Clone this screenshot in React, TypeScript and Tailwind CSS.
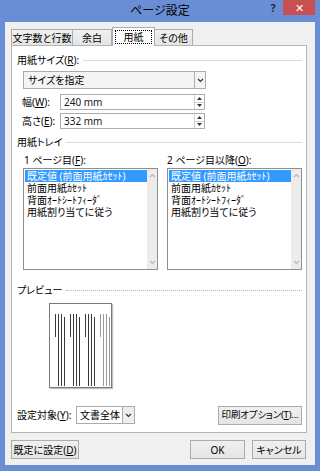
import React from "react";

const trayItems = ["既定値 (前面用紙ｶｾｯﾄ)", "前面用紙ｶｾｯﾄ", "背面ｵｰﾄｼｰﾄﾌｨｰﾀﾞ", "用紙割り当てに従う"];

const Chevron = ({ up = false, color = "#333" }: { up?: boolean; color?: string }) => (
  <svg width="7" height="5" viewBox="0 0 7 5">
    <path d={up ? "M1 4l2.5-2.5L6 4" : "M1 1l2.5 2.5L6 1"} stroke={color} strokeWidth="1.2" fill="none" />
  </svg>
);

const Spinner = () => (
  <div className="w-[10px] flex flex-col border-l border-[#d0d0d0]">
    <div className="flex-1 flex items-center justify-center border-b border-[#d0d0d0]">
      <svg width="5" height="3" viewBox="0 0 5 3"><path d="M0 3h5L2.5 0z" fill="#333" /></svg>
    </div>
    <div className="flex-1 flex items-center justify-center">
      <svg width="5" height="3" viewBox="0 0 5 3"><path d="M0 0h5L2.5 3z" fill="#333" /></svg>
    </div>
  </div>
);

const GroupLabel = ({ children, dotted = false }: { children: React.ReactNode; dotted?: boolean }) => (
  <div className="flex items-center h-[12px] ml-[5px] mr-[4px]">
    <span>{children}</span>
    <div className={`flex-1 ml-[4px] border-t ${dotted ? "border-dotted border-[#b8b8b8]" : "border-[#dcdcdc]"}`} />
  </div>
);

function ListBox() {
  return (
    <div className="flex h-[102px] w-[135px] border border-[#8e8f8f] bg-white">
      <div className="flex-1 pt-px pl-px">
        {trayItems.map((t, i) => (
          <div
            key={t}
            className={`h-[12px] leading-[12px] pl-[2px] whitespace-nowrap overflow-hidden ${i === 0 ? "bg-[#3399ff] text-white" : ""}`}
          >
            {t}
          </div>
        ))}
      </div>
      <div className="w-[10px] bg-[#ececec] flex flex-col justify-between items-center py-[4px]">
        <Chevron up color="#b5b5b5" />
        <Chevron color="#b5b5b5" />
      </div>
    </div>
  );
}

function PreviewPage() {
  const groups = [5, 20, 35, 50];
  return (
    <div className="ml-[37px] w-[63px] h-[85px] border border-[#7a7a7a] bg-white shadow-[1px_1px_1px_rgba(0,0,0,0.25)]">
      <svg width="61" height="83" viewBox="0 0 61 83">
        {groups.map((gx, g) => {
          const c = g === 3 ? "#9a9a9a" : "#3a3a3a";
          return (
            <g key={gx} stroke={c} strokeWidth="1">
              <line x1={gx + 0.5} y1="10" x2={gx + 0.5} y2="33" />
              <line x1={gx + 3.5} y1="10" x2={gx + 3.5} y2="82" />
              <line x1={gx + 6.5} y1="10" x2={gx + 6.5} y2="82" />
              <line x1={gx + 9.5} y1="13" x2={gx + 9.5} y2="82" />
            </g>
          );
        })}
      </svg>
    </div>
  );
}

const btn =
  "h-[19px] flex items-center justify-center whitespace-nowrap border border-[#acacac] bg-linear-to-b from-[#f0f0f0] to-[#e5e5e5]";

export default function App() {
  return (
    <div className="w-[320px] h-[471px] bg-[#6a8ed6] flex flex-col overflow-hidden text-[10px] leading-[12px] text-black font-['Noto_Sans','Noto_Sans_CJK_JP',sans-serif] [font-feature-settings:'palt']">
      {/* title bar */}
      <div className="h-[22px] flex items-start">
        <div className="w-[57px]" />
        <div className="flex-1 text-center pt-[4px] text-[12px] leading-[14px]">ページ設定</div>
        <div className="w-[57px] flex items-start">
          <div className="w-[20px] text-center font-bold text-[11px] leading-[16px] text-[#1c2a44]">?</div>
          <div className="w-[32px] h-[15px] bg-[#c75050] flex items-center justify-center text-white text-[11px] leading-[15px]">
            ✕
          </div>
        </div>
      </div>

      {/* body */}
      <div className="mx-[5px] mb-[6px] flex-1 bg-[#f0f0f0] pt-[5px] pl-[6px] pr-[8px] pb-[6px] flex flex-col">
        {/* tabs */}
        <div className="h-[18px] flex items-end">
          <div className="w-[62px] h-[16px] border border-b-0 border-[#acacac] bg-linear-to-b from-[#f0f0f0] to-[#e5e5e5] flex items-center justify-center">
            文字数と行数
          </div>
          <div className="w-[40px] -ml-px h-[16px] border border-b-0 border-[#acacac] bg-linear-to-b from-[#f0f0f0] to-[#e5e5e5] flex items-center justify-center">
            余白
          </div>
          <div className="relative z-10 w-[43px] h-[19px] -mb-px border border-b-0 border-[#acacac] bg-white p-[2px]">
            <div className="h-full border border-dotted border-black flex items-center justify-center">用紙</div>
          </div>
          <div className="w-[38px] h-[16px] border border-b-0 border-l-0 border-[#acacac] bg-linear-to-b from-[#f0f0f0] to-[#e5e5e5] flex items-center justify-center">
            その他
          </div>
        </div>

        {/* panel */}
        <div className="h-[388px] border border-[#b4b4b4] bg-white flex flex-col">
          <div className="mt-[8px]">
            <GroupLabel>
              用紙サイズ(<u>R</u>):
            </GroupLabel>
          </div>
          <div className="mt-[5px] ml-[11px] w-[183px] h-[18px] border border-[#acacac] bg-[#f4f4f4] flex">
            <div className="flex-1 pl-[4px] flex items-center">サイズを指定</div>
            <div className="w-[11px] border-l border-[#acacac] flex items-center justify-center">
              <Chevron />
            </div>
          </div>
          <div className="mt-[5px] ml-[10px] h-[16px] flex">
            <div className="w-[38px] flex items-center">
              幅(<u>W</u>):
            </div>
            <div className="w-[145px] border border-[#abadb3] bg-white flex">
              <div className="flex-1 pl-[3px] flex items-center text-[#1a1a1a]">240 mm</div>
              <Spinner />
            </div>
          </div>
          <div className="mt-[3px] ml-[10px] h-[16px] flex">
            <div className="w-[38px] flex items-center">
              高さ(<u>E</u>):
            </div>
            <div className="w-[145px] border border-[#abadb3] bg-white flex">
              <div className="flex-1 pl-[3px] flex items-center text-[#1a1a1a]">332 mm</div>
              <Spinner />
            </div>
          </div>

          <div className="mt-[7px]">
            <GroupLabel>用紙トレイ</GroupLabel>
          </div>
          <div className="mt-[6px] ml-[11px] flex gap-[9px]">
            <div className="w-[135px]">
              <div className="h-[12px] pl-px">
                1 ページ目(<u>F</u>):
              </div>
              <div className="mt-[2px]">
                <ListBox />
              </div>
            </div>
            <div className="w-[135px]">
              <div className="h-[12px]">
                2 ページ目以降(<u>O</u>):
              </div>
              <div className="mt-[2px]">
                <ListBox />
              </div>
            </div>
          </div>

          <div className="mt-[14px]">
            <GroupLabel dotted>プレビュー</GroupLabel>
          </div>
          <div className="mt-[7px]">
            <PreviewPage />
          </div>

          <div className="mt-[18px] ml-[5px] mr-[4px] h-[18px] flex items-center">
            <div className="w-[59px]">
              設定対象(<u>Y</u>):
            </div>
            <div className="w-[59px] h-[18px] border border-[#acacac] bg-white flex">
              <div className="flex-1 pl-[3px] flex items-center">文書全体</div>
              <div className="w-[12px] border-l border-[#acacac] bg-[#eeeeee] flex items-center justify-center">
                <Chevron />
              </div>
            </div>
            <div className={`${btn} ml-auto w-[84px] h-[18px] text-[9.5px] tracking-[-0.2px]`}>
              印刷オプション(<u>T</u>)...
            </div>
          </div>
        </div>

        {/* dialog buttons */}
        <div className="mt-[7px] flex">
          <div className={`${btn} w-[68px]`}>
            既定に設定(<u>D</u>)
          </div>
          <div className={`${btn} ml-auto w-[55px] border-[#3c9cf0]`}>OK</div>
          <div className={`${btn} ml-[7px] w-[54px] mr-px`}>キャンセル</div>
        </div>
      </div>
    </div>
  );
}
